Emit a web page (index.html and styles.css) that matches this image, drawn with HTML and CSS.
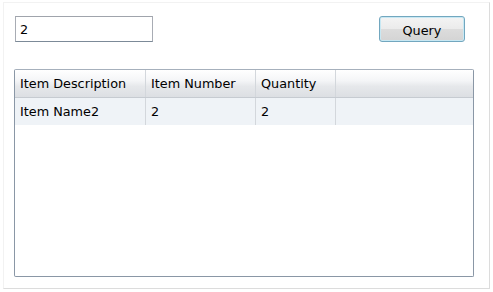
FILE: index.html
```html
<!DOCTYPE html>
<html>
	<head>
		<meta charset="UTF-8">
		<title>Query</title>
		<link rel="stylesheet" href="styles.css">
	</head>
	<body>
		<div class="panel">
			<div class="bar">
				<input class="search" type="text" value="2">
				<button class="btn">Query</button>
			</div>
			<div class="grid">
				<div class="row head">
					<div class="cell c1">Item Description</div>
					<div class="cell c2">Item Number</div>
					<div class="cell c3">Quantity</div>
					<div class="cell c4"></div>
				</div>
				<div class="row item">
					<div class="cell c1">Item Name2</div>
					<div class="cell c2">2</div>
					<div class="cell c3">2</div>
					<div class="cell c4"></div>
				</div>
			</div>
		</div>
	</body>
</html>
```
FILE: styles.css
```css
*{
	margin: 0;
	padding: 0;
	box-sizing: border-box;
}
body{
	background: #fff;
	font-family: "DejaVu Sans", Verdana, sans-serif;
	font-size: 12.8px;
	color: #000;
	padding: 2px 0 0 3px;
}
.panel{
	width: 487px;
	height: 287px;
	background: #fff;
	border: 1px solid #f2f2f2;
	border-right-color: #dcdcdc;
	border-bottom-color: #dcdcdc;
	padding: 13px 15px 0 10px;
}
.bar{
	display: flex;
	justify-content: space-between;
	align-items: center;
	padding: 0 9px 0 1px;
}
.search{
	width: 138px;
	height: 26px;
	border: 1px solid #a8acb4;
	border-top-color: #a0a4ac;
	border-bottom-color: #7c8a98;
	padding: 0 4px;
	font-family: "DejaVu Sans", Verdana, sans-serif;
	font-size: 12.8px;
	outline: none;
}
.btn{
	width: 86px;
	height: 26px;
	padding-top: 2px;
	border: 1px solid #72a7bf;
	border-radius: 3px;
	background: linear-gradient(#f4f4f4, #ebebeb 50%, #dcdcdc 51%, #d4d4d4);
	box-shadow: inset 0 0 0 1px #c8e8f3;
	font-family: "DejaVu Sans", Verdana, sans-serif;
	font-size: 12.8px;
	color: #000;
}
.grid{
	margin-top: 27px;
	width: 460px;
	height: 208px;
	border: 1px solid #8a97a6;
	border-top-color: #a6b0bc;
	border-radius: 2px;
	overflow: hidden;
}
.row{
	display: flex;
	height: 28px;
}
.head{
	background: linear-gradient(#ffffff, #f4f5f7 40%, #e6e8eb 60%, #dcdfe3);
	border-bottom: 1px solid #c6cbd1;
}
.item{
	height: 27px;
	background: #eff3f7;
}
.cell{
	display: flex;
	align-items: center;
	padding-left: 5px;
	border-right: 1px solid #d3d7dc;
	white-space: nowrap;
}
.c1{
	width: 131px;
}
.c2{
	width: 110px;
}
.c3{
	width: 80px;
}
.c4{
	flex: 1;
	border-right: none;
}
```
